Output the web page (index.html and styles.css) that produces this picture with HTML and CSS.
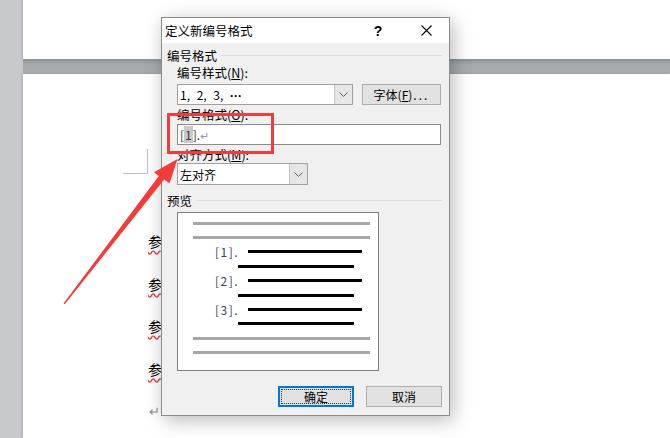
FILE: index.html
```html
<!DOCTYPE html>
<html lang="zh-CN">
<head>
    <meta charset="UTF-8">
    <meta name="viewport" content="width=device-width, initial-scale=1.0">
    <title>定义新编号格式</title>
    <link rel="stylesheet" href="styles.css">
</head>
<body>

    <!-- Document pages behind the dialog -->
    <div class="desk">
        <div class="page page-prev"></div>
        <div class="page-gap"></div>
        <div class="page page-cur">
            <div class="corner-mark"></div>
            <div class="doc-text">
                <p><span class="typo">参</span></p>
                <p><span class="typo">参</span></p>
                <p><span class="typo">参</span></p>
                <p><span class="typo">参</span></p>
                <p class="ret">↵</p>
            </div>
        </div>
    </div>

    <!-- Dialog -->
    <div class="dialog">
        <div class="dlg-title">
            <span class="dlg-caption">定义新编号格式</span>
            <span class="dlg-help">?</span>
            <span class="dlg-close">
                <svg width="11" height="11" viewBox="0 0 11 11"><path d="M0.5 0.5 L10.5 10.5 M10.5 0.5 L0.5 10.5" stroke="#000" stroke-width="1.1" fill="none"/></svg>
            </span>
        </div>

        <div class="dlg-body">
            <div class="group-head"><span>编号格式</span></div>

            <div class="field-label">编号样式(<u>N</u>):</div>
            <div class="row">
                <div class="combo combo-wide">
                    <span class="combo-text list-style">1, 2, 3, <b>···</b></span>
                    <span class="combo-arrow"><svg width="9" height="5" viewBox="0 0 9 5"><path d="M0.5 0.5 L4.5 4.5 L8.5 0.5" stroke="#606060" fill="none"/></svg></span>
                </div>
                <button class="btn btn-font">字体(<u>F</u>)<span class="dots">...</span></button>
            </div>

            <div class="field-label">编号格式(<u>O</u>):</div>
            <div class="textbox">[<span class="sel">1</span>].<span class="para">↵</span></div>

            <div class="field-label">对齐方式(<u>M</u>):</div>
            <div class="combo combo-narrow">
                <span class="combo-text">左对齐</span>
                <span class="combo-arrow"><svg width="9" height="5" viewBox="0 0 9 5"><path d="M0.5 0.5 L4.5 4.5 L8.5 0.5" stroke="#606060" fill="none"/></svg></span>
            </div>

            <div class="group-head group-preview"><span>预览</span></div>
            <div class="preview">
                <div class="pv-row pv-gray"><i></i></div>
                <div class="pv-row pv-gray"><i></i></div>
                <div class="pv-row pv-num"><b>[1].</b><i></i></div>
                <div class="pv-row pv-cont"><i></i></div>
                <div class="pv-row pv-num"><b>[2].</b><i></i></div>
                <div class="pv-row pv-cont"><i></i></div>
                <div class="pv-row pv-num"><b>[3].</b><i></i></div>
                <div class="pv-row pv-cont"><i></i></div>
                <div class="pv-row pv-gray"><i></i></div>
                <div class="pv-row pv-gray"><i></i></div>
            </div>

            <div class="dlg-buttons">
                <button class="btn btn-default"><span>确定</span></button>
                <button class="btn">取消</button>
            </div>
        </div>
    </div>

    <!-- Red annotation -->
    <div class="red-box"></div>
    <svg class="arrow" width="670" height="438" viewBox="0 0 670 438">
        <polygon points="63.5,303.5 158.8,176 154,172.2 177.5,159 169.6,183.2 164.2,179.6 65,304" fill="#f23b3b"/>
    </svg>

</body>
</html>
```

FILE: styles.css
```css
/* Reset */
* {
    margin: 0;
    padding: 0;
    box-sizing: border-box;
}

body {
    width: 670px;
    height: 438px;
    overflow: hidden;
    position: relative;
    background-color: #c7c9cc;
    font-family: "Noto Sans CJK SC", "Microsoft YaHei", sans-serif;
    font-size: 12px;
    color: #000;
}

/* Document area */
.desk {
    margin-left: 23px;
    height: 438px;
    display: flex;
    flex-direction: column;
}

.page {
    background-color: #fff;
    box-shadow: -1px 0 2px rgba(0, 0, 0, 0.15);
}

.page-prev {
    height: 59px;
}

.page-gap {
    height: 15px;
    background: linear-gradient(#8e9194, #a6a9ac 35%, #a9acaf);
}

.page-cur {
    flex: 1;
    padding-top: 75px;
}

.corner-mark {
    margin-left: 100px;
    width: 25px;
    height: 25px;
    border-right: 1px solid #c0c0c0;
    border-bottom: 1px solid #c0c0c0;
}

.doc-text {
    margin-left: 125px;
    margin-top: 46px;
}

.doc-text p {
    height: 42.5px;
    line-height: 42.5px;
    font-size: 14px;
}

.typo {
    text-decoration: underline wavy #e84040;
    text-underline-offset: 3px;
}

.doc-text .ret {
    color: #8a8a8a;
    font-size: 13px;
    padding-left: 1px;
}

/* Dialog */
.dialog {
    position: absolute;
    left: 161px;
    top: 17px;
    width: 289px;
    height: 399px;
    background-color: #f0f0f0;
    border: 1px solid #8c8c8c;
    box-shadow: 3px 4px 18px rgba(0, 0, 0, 0.28);
    display: flex;
    flex-direction: column;
}

.dlg-title {
    height: 25px;
    background-color: #fff;
    display: flex;
    align-items: center;
    padding-left: 3px;
}

.dlg-caption {
    flex: 1;
    font-size: 12.5px;
}

.dlg-help {
    width: 46px;
    text-align: center;
    font-family: "Liberation Sans", Arial, sans-serif;
    font-size: 14px;
    font-weight: bold;
    padding-right: 4px;
}

.dlg-close {
    width: 46px;
    display: flex;
    justify-content: center;
}

.dlg-body {
    flex: 1;
    padding: 4px 7px 0 5px;
}

.group-head {
    display: flex;
    align-items: center;
    gap: 4px;
    height: 16px;
    font-size: 12.5px;
}

.group-head::after {
    content: "";
    flex: 1;
    border-top: 1px solid #dcdcdc;
}

.field-label {
    margin: 2px 0 0 10px;
    height: 16px;
    line-height: 16px;
    font-size: 12.5px;
}

.field-label u {
    text-underline-offset: 1px;
}

.row {
    margin: 3px 0 0 10px;
    display: flex;
    gap: 9px;
}

/* Combo boxes and text box */
.combo {
    height: 21px;
    background-color: #fff;
    border: 1px solid #a0a0a0;
    display: flex;
    align-items: center;
}

.combo-wide {
    width: 176px;
}

.combo-narrow {
    width: 131px;
    margin-left: 10px;
    height: 22px;
}

.combo-text {
    flex: 1;
    padding-left: 2px;
}

.list-style {
    word-spacing: 4px;
}

.list-style b {
    font-family: "Liberation Sans", Arial, sans-serif;
    font-weight: bold;
}

.combo-arrow {
    width: 18px;
    height: 100%;
    background-color: #e6e6e6;
    border-left: 1px solid #c4c4c4;
    display: flex;
    align-items: center;
    justify-content: center;
}

.textbox {
    margin: 1px 0 0 10px;
    width: 264px;
    height: 21px;
    line-height: 19px;
    background-color: #fff;
    border: 1px solid #8c8c8c;
    padding-left: 2px;
    color: #333;
}

.textbox .sel {
    background-color: #c9c9c9;
    padding: 0 1px;
}

.textbox .para {
    color: #9a9aa8;
    font-size: 11px;
}

/* Buttons */
.btn {
    height: 21px;
    font-family: inherit;
    font-size: 12px;
    background-color: #e1e1e1;
    border: 1px solid #adadad;
    color: #000;
}

.btn-font {
    width: 79px;
}

.btn-font .dots {
    letter-spacing: 2px;
    padding-left: 1px;
}

.dlg-buttons {
    margin-top: 15px;
    display: flex;
    justify-content: flex-end;
    gap: 12px;
}

.dlg-buttons .btn {
    width: 76px;
}

.btn-default {
    border: 2px solid #0078d7;
    padding: 1px;
}

.btn-default span {
    display: block;
    height: 100%;
    line-height: 13px;
    border: 1px dotted #333;
}

/* Preview */
.group-preview {
    margin-top: 7px;
}

.preview {
    margin: 4px 0 0 10px;
    width: 202px;
    height: 159px;
    background-color: #fff;
    border: 1px solid #7f7f7f;
    padding-top: 3px;
}

.pv-row {
    height: 14.4px;
    display: flex;
    align-items: center;
}

.pv-row i {
    display: block;
    height: 3px;
}

.pv-gray {
    padding-left: 15px;
}

.pv-gray i {
    width: 177px;
    background-color: #a6a6a6;
}

.pv-num {
    padding-left: 37px;
}

.pv-num b {
    width: 33px;
    font-weight: normal;
    font-size: 12px;
    letter-spacing: 1.5px;
    color: #3a3f55;
}

.pv-num i {
    width: 114px;
    background-color: #000;
}

.pv-cont {
    padding-left: 60px;
}

.pv-cont i {
    width: 116px;
    background-color: #000;
}

/* Annotation overlay */
.red-box {
    position: absolute;
    left: 167px;
    top: 113px;
    width: 107px;
    height: 41px;
    border: 3px solid #f23b3b;
}

.arrow {
    position: absolute;
    left: 0;
    top: 0;
    pointer-events: none;
}
```
